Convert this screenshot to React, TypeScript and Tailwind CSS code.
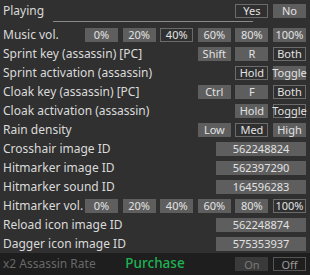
import React from "react";

type Opt = { label: string; on?: boolean };

const font = { fontFamily: '"Noto Sans", "Liberation Sans", sans-serif' };

function Btn({ label, on, wide }: Opt & { wide?: boolean }) {
  return (
    <div
      className={`flex h-[14px] items-center justify-center text-[11px] leading-none ${
        wide ? "w-[90px]" : "w-[33px]"
      } ${
        on
          ? "border border-[#6b6b6b] bg-[#303030] text-[#e2e2e2]"
          : "bg-[#5e5e5e] text-[#e2e2e2]"
      }`}
    >
      {label}
    </div>
  );
}

function Row({ label, children }: { label: string; children?: React.ReactNode }) {
  return (
    <div className="flex h-[19px] items-center justify-between pl-[3px] pr-[4px]">
      <span className="whitespace-nowrap text-[12px] leading-none text-[#dadada]">{label}</span>
      <div className="flex shrink-0 gap-[4.6px]">{children}</div>
    </div>
  );
}

const pct = ["0%", "20%", "40%", "60%", "80%", "100%"];

export default function App() {
  return (
    <div className="flex h-[275px] w-[310px] flex-col bg-[#303030]" style={font}>
      <div className="h-[25px]">
        <div className="flex h-[21px] items-center justify-between pl-[3px] pr-[4px]">
          <span className="text-[12px] leading-none text-[#dadada]">Playing</span>
          <div className="flex gap-[4.6px]">
            <Btn label="Yes" on />
            <Btn label="No" />
          </div>
        </div>
        <div className="ml-[53px] h-px w-[200px] bg-[#8a8a8a]" />
      </div>
      <Row label="Music vol.">
        {pct.map((p) => (
          <Btn key={p} label={p} on={p === "40%"} />
        ))}
      </Row>
      <Row label="Sprint key (assassin) [PC]">
        <Btn label="Shift" />
        <Btn label="R" />
        <Btn label="Both" on />
      </Row>
      <Row label="Sprint activation (assassin)">
        <Btn label="Hold" on />
        <Btn label="Toggle" />
      </Row>
      <Row label="Cloak key (assassin) [PC]">
        <Btn label="Ctrl" />
        <Btn label="F" />
        <Btn label="Both" on />
      </Row>
      <Row label="Cloak activation (assassin)">
        <Btn label="Hold" />
        <Btn label="Toggle" on />
      </Row>
      <Row label="Rain density">
        <Btn label="Low" />
        <Btn label="Med" on />
        <Btn label="High" />
      </Row>
      <Row label="Crosshair image ID">
        <Btn label="562248824" wide />
      </Row>
      <Row label="Hitmarker image ID">
        <Btn label="562397290" wide />
      </Row>
      <Row label="Hitmarker sound ID">
        <Btn label="164596283" wide />
      </Row>
      <Row label="Hitmarker vol.">
        {pct.map((p) => (
          <Btn key={p} label={p} on={p === "100%"} />
        ))}
      </Row>
      <Row label="Reload icon image ID">
        <Btn label="562248874" wide />
      </Row>
      <Row label="Dagger icon image ID">
        <Btn label="575353937" wide />
      </Row>
      <div className="relative flex flex-1 items-center justify-between bg-[#1e1e1e] pl-[3px] pr-[4px]">
        <span className="text-[12px] leading-none text-[#686868]">x2 Assassin Rate</span>
        <span className="absolute left-1/2 -translate-x-1/2 text-[13.5px] font-medium leading-none text-[#1fb352]">
          Purchase
        </span>
        <div className="flex gap-[4.6px]">
          <div className="flex h-[14px] w-[33px] items-center justify-center bg-[#3a3a3a] text-[11px] leading-none text-[#7a7a7a]">
            On
          </div>
          <div className="flex h-[14px] w-[33px] items-center justify-center border border-[#555] text-[11px] leading-none text-[#9a9a9a]">
            Off
          </div>
        </div>
      </div>
    </div>
  );
}
